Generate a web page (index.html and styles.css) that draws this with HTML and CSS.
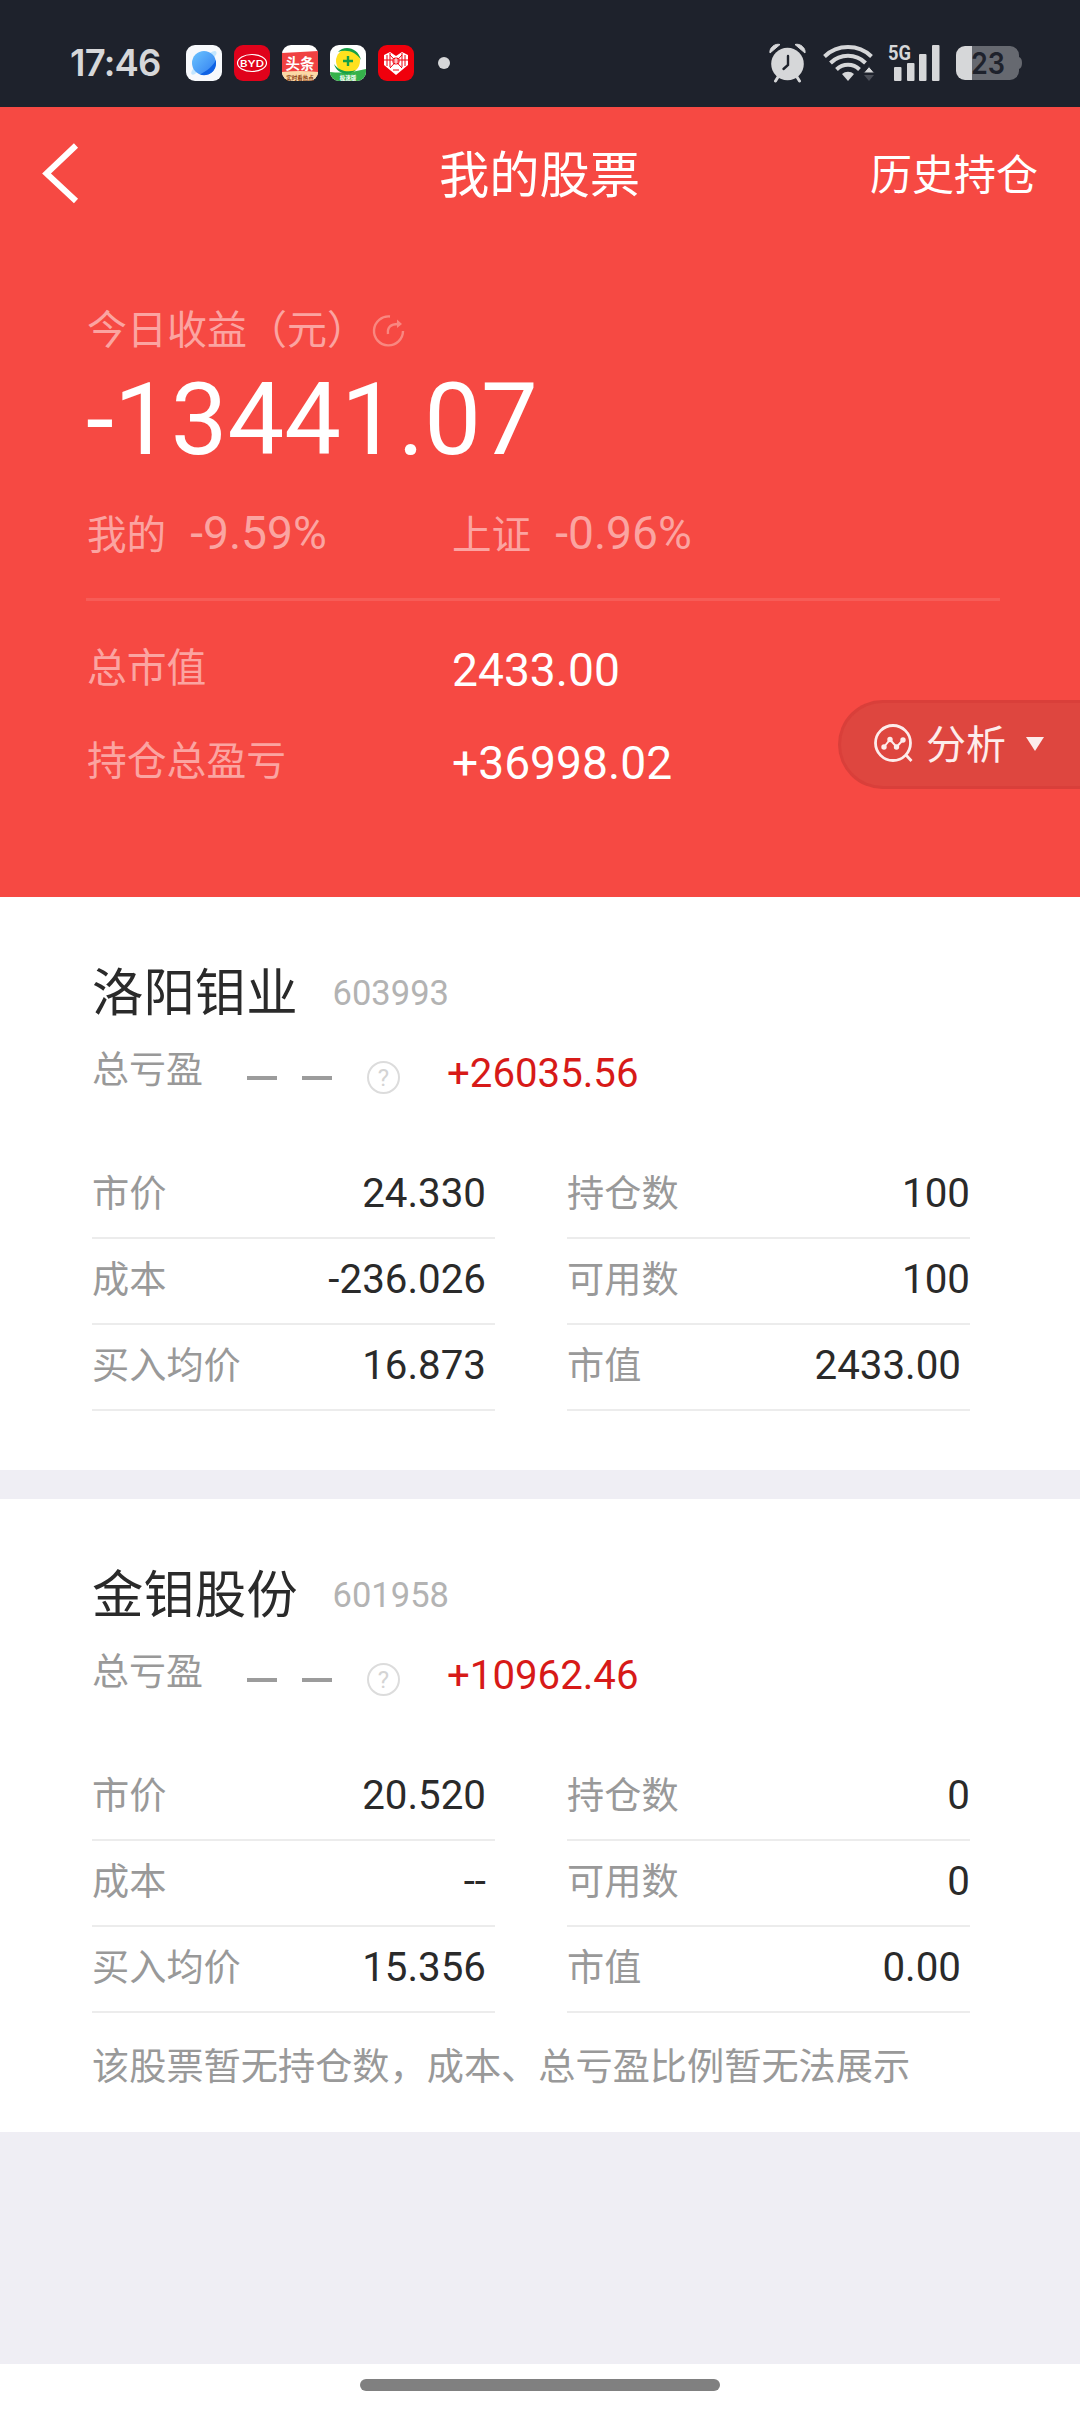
FILE: index.html
```html
<!DOCTYPE html>
<html lang="zh-CN">
<head>
  <meta charset="UTF-8">
  <meta name="viewport" content="width=device-width, initial-scale=1">
  <title>我的股票</title>
  <link rel="stylesheet" href="styles.css">
</head>
<body>
  <!-- 状态栏 -->
  <div class="status">
    <span class="time">17:46</span>
    <div class="apps">
      <svg width="36" height="36" viewBox="0 0 36 36">
        <defs>
          <linearGradient id="ball" x1="0" y1="0" x2="1" y2="1">
            <stop offset="0" stop-color="#6cc4ff"/>
            <stop offset="1" stop-color="#2f7cf0"/>
          </linearGradient>
        </defs>
        <rect width="36" height="36" rx="9" fill="#f7f9fc"/>
        <path d="M24 8c4-3 8-3 6 2L9 29c-4 2-5-1-2-5z" fill="#c3e6ff"/>
        <circle cx="18" cy="18" r="12" fill="url(#ball)"/>
        <path d="M30 17A12 12 0 0 1 14 29.500C21 26 27 21 30 15z" fill="#0f62e4"/>
      </svg>
      <svg width="36" height="36" viewBox="0 0 36 36">
        <rect width="36" height="36" rx="9" fill="#e0021b"/>
        <ellipse cx="18" cy="18" rx="14.500" ry="8.500" fill="none" stroke="#fff" stroke-width="1.200"/>
        <text class="byd" x="18" y="21.500" text-anchor="middle" textLength="24" lengthAdjust="spacingAndGlyphs">BYD</text>
      </svg>
      <svg width="36" height="36" viewBox="0 0 36 36">
        <rect width="36" height="36" rx="9" fill="#fff"/>
        <path d="M0 8l36-2v21H0z" fill="#f04142"/>
        <path d="M0 27q18-2 36 0a9 9 0 0 1-9 9H9a9 9 0 0 1-9-9z" fill="#fbd9a6"/>
        <text class="toutiao" x="18" y="23.500" text-anchor="middle">头条</text>
        <text class="tiny brown" x="18" y="34.500" text-anchor="middle">实时看热点</text>
      </svg>
      <svg width="36" height="36" viewBox="0 0 36 36">
        <rect width="36" height="36" rx="9" fill="#fff"/>
        <path d="M0 27q18 2 36-3v3a9 9 0 0 1-9 9H9a9 9 0 0 1-9-9z" fill="#35b34b"/>
        <circle cx="18" cy="16" r="12" fill="#ffe11e"/>
        <path d="M8 7C14 0 28 2 31 15 26 7 17 4 8 7zM4 19c5 7 14 9 22 6-6 6-19 5-22-6z" fill="#15a046"/>
        <path d="M18 11v10M13 16h10" stroke="#15a046" stroke-width="2.400"/>
        <text class="tiny white" x="18" y="34.500" text-anchor="middle">极速版</text>
      </svg>
      <svg width="36" height="36" viewBox="0 0 36 36">
        <rect width="36" height="36" rx="9" fill="#f0000c"/>
        <path d="M6 10l6-3 6 4 6-4 6 3v10L18 30 6 20z" fill="#fff"/>
        <path d="M9 10v11M12 8v14M27 10v11M24 8v14M6 15h24M12 10l12 13M24 10L12 23M15 25h6" stroke="#f0000c" stroke-width="1"/>
        <circle cx="18" cy="16" r="3.600" fill="#f0000c"/>
        <path d="M15.500 15h5M15.500 17h5M18 13v6" stroke="#fff" stroke-width="1"/>
      </svg>
    </div>
    <i class="dot"></i>

    <svg class="alarm" width="38" height="40" viewBox="0 0 38 40">
      <g fill="#d6d7d9">
        <path d="M1 10C0 5 6 0 11 1.500zM36 10C37 5 31 0 26 1.500z" stroke="#d6d7d9" stroke-linejoin="round"/>
        <circle cx="18.500" cy="21" r="16.300"/>
      </g>
      <path d="M9 34l-2.500 4M28 34l2.500 4" stroke="#d6d7d9" stroke-width="3" stroke-linecap="round"/>
      <path d="M19 13v9l-4.500 4" fill="none" stroke="#1e222c" stroke-width="2.400" stroke-linecap="round"/>
    </svg>
    <svg class="wifi" width="52" height="40" viewBox="0 0 52 40">
      <g fill="none" stroke="#d6d7d9" stroke-width="4">
        <path d="M1.500 13.500a34 34 0 0 1 47 0"/>
        <path d="M7.500 20a25 25 0 0 1 35 0"/>
        <path d="M13.500 26.500a16.500 16.500 0 0 1 23 0"/>
      </g>
      <path d="M19 31a9 9 0 0 1 12 0l-6 7z" fill="#d6d7d9"/>
      <path d="M40.500 30l5.500-6.500 5.500 6.500z" fill="#d6d7d9" stroke="#1e222c"/>
      <path d="M41 32h10l-5 6z" fill="#4b4e57"/>
    </svg>
    <svg class="signal" width="54" height="52" viewBox="0 -6 54 52">
      <text class="g5" x="0" y="16.500" textLength="23" lengthAdjust="spacingAndGlyphs">5G</text>
      <g fill="#d6d7d9">
        <rect x="6" y="24" width="7.500" height="14" rx="1"/>
        <rect x="19" y="20" width="7.500" height="18" rx="1"/>
        <rect x="31" y="11" width="7.500" height="27" rx="1"/>
        <rect x="44" y="2" width="7.500" height="36" rx="1"/>
      </g>
    </svg>
    <svg class="battery" width="68" height="34" viewBox="0 0 68 34">
      <path d="M9 0h7v34H9a9 9 0 0 1-9-9V9a9 9 0 0 1 9-9z" fill="#d6d7d9"/>
      <path d="M16 0h38a9 9 0 0 1 9 9v2q3 1 3 6t-3 6v2a9 9 0 0 1-9 9H16z" fill="#666970"/>
      <text class="level" x="32" y="28" text-anchor="middle" textLength="34" lengthAdjust="spacingAndGlyphs">23</text>
    </svg>
  </div>

  <!-- 收益总览 -->
  <div class="hero">
    <div class="nav">
      <svg class="back" width="40" height="62" viewBox="0 0 40 62">
        <path d="M35 2.500L5.500 30.500 35 58" fill="none" stroke="#fff" stroke-width="6"/>
      </svg>
      <span class="title">我的股票</span>
      <span class="history">历史持仓</span>
    </div>

    <div class="today">
      今日收益（元）
      <svg class="share" width="34" height="34" viewBox="0 0 34 34">
        <g fill="none" stroke="#f98780" stroke-width="2.400">
          <path d="M18 2.500A14.500 14.500 0 1 0 31 17"/>
          <path d="M16 20c-1-7 3-10 10-10"/>
        </g>
        <path d="M25 5.500l5 4.500-5 4z" fill="#f98780"/>
      </svg>
    </div>
    <div class="profit">-13441.07</div>
    <div class="rates">
      <div class="cell"><span>我的</span><b>-9.59%</b></div>
      <div class="cell"><span>上证</span><b>-0.96%</b></div>
    </div>
    <div class="line"></div>
    <div class="sum"><span>总市值</span><b>2433.00</b></div>
    <div class="sum"><span>持仓总盈亏</span><b>+36998.02</b></div>

    <div class="analyse">
      <svg width="40" height="40" viewBox="0 0 40 40">
        <g fill="none" stroke="#fdeceb">
          <circle cx="19" cy="19" r="17.500" stroke-width="2.800"/>
          <path d="M32 31l5.500 6" stroke-width="2.800"/>
          <path d="M10 23l6-7.500 6.500 7.500 6.500-7" stroke-width="2"/>
        </g>
        <g fill="#fdeceb">
          <circle cx="10" cy="23" r="2.700"/>
          <circle cx="16" cy="15.500" r="2.700"/>
          <circle cx="22.500" cy="23" r="2.700"/>
          <circle cx="29" cy="16" r="2.700"/>
        </g>
      </svg>
      <span>分析</span>
      <i class="arrow"></i>
    </div>
  </div>

  <!-- 持仓 -->
  <div class="card">
    <div class="name">洛阳钼业<span class="code">603993</span></div>
    <div class="pl">
      <span class="label">总亏盈</span>
      <i class="dash"></i><i class="dash"></i>
      <span class="help">?</span>
      <b>+26035.56</b>
    </div>
    <div class="grid">
      <div class="row"><span>市价</span><b>24.330</b></div>
      <div class="row"><span>持仓数</span><b>100</b></div>
      <div class="row"><span>成本</span><b>-236.026</b></div>
      <div class="row"><span>可用数</span><b>100</b></div>
      <div class="row"><span>买入均价</span><b>16.873</b></div>
      <div class="row total"><span>市值</span><b>2433.00</b></div>
    </div>
  </div>

  <div class="card last">
    <div class="name">金钼股份<span class="code">601958</span></div>
    <div class="pl">
      <span class="label">总亏盈</span>
      <i class="dash"></i><i class="dash"></i>
      <span class="help">?</span>
      <b>+10962.46</b>
    </div>
    <div class="grid">
      <div class="row"><span>市价</span><b>20.520</b></div>
      <div class="row"><span>持仓数</span><b>0</b></div>
      <div class="row"><span>成本</span><b>--</b></div>
      <div class="row"><span>可用数</span><b>0</b></div>
      <div class="row"><span>买入均价</span><b>15.356</b></div>
      <div class="row total"><span>市值</span><b>0.00</b></div>
    </div>
    <p class="note">该股票暂无持仓数，成本、总亏盈比例暂无法展示</p>
  </div>

  <div class="home"><i></i></div>
</body>
</html>
```

FILE: styles.css
```css
* {
  box-sizing: border-box;
}
body {
  margin: 0;
  width: 1080px;
  height: 2412px;
  display: flex;
  flex-direction: column;
  overflow: hidden;
  font-family: Roboto, "Noto Sans CJK SC", sans-serif;
  background: #efeef4;
  color: #2a2a2a;
}
b {
  font-weight: 400;
}
svg {
  display: block;
  flex: none;
}

/* status bar */
.status {
  height: 107px;
  display: flex;
  align-items: center;
  padding: 18px 0 0 70px;
  background: #1e222c;
  flex: none;
}
.time {
  width: 116px;
  font: 600 36.5px/40px Inter, sans-serif;
  letter-spacing: -0.8px;
  color: #d6d7d9;
}
.apps {
  display: flex;
  gap: 12px;
}
.byd {
  font: 600 9.5px Inter, sans-serif;
  fill: #fff;
}
.toutiao {
  font: 700 14.5px "Noto Sans CJK SC", sans-serif;
  fill: #fff;
}
.tiny {
  font: 700 5.5px "Noto Sans CJK SC", sans-serif;
}
.brown {
  fill: #8a3d12;
}
.white {
  fill: #fff;
}
.dot {
  width: 12px;
  height: 12px;
  margin-left: 24px;
  border-radius: 50%;
  background: #d6d7d9;
}
.alarm {
  margin-left: 319px;
}
.wifi {
  margin-left: 16px;
}
.signal {
  margin-left: 13px;
}
.battery {
  margin-left: 14px;
}
.g5 {
  font: 700 21px Roboto, sans-serif;
  fill: #d6d7d9;
}
.level {
  font: 600 30px Inter, sans-serif;
  fill: #1e222c;
}

/* red header */
.hero {
  position: relative;
  height: 790px;
  flex: none;
  background: #f64943;
  color: #fff;
}
.nav {
  height: 134px;
  display: grid;
  grid-template-columns: 1fr auto 1fr;
  align-items: center;
  padding: 0 42px 0 41px;
}
.title {
  margin-bottom: 6px;
  font-size: 50.3px;
}
.history {
  margin-bottom: 5px;
  font-size: 42px;
  justify-self: end;
}
.today {
  display: flex;
  align-items: center;
  margin: 60px 0 0 87px;
  font-size: 40px;
  line-height: 60px;
  color: #fba4a1;
}
.share {
  margin-left: 5px;
}
.profit {
  margin-left: 86px;
  font-size: 101px;
  line-height: 117px;
}
.rates {
  display: grid;
  grid-template-columns: 365px 365px;
  margin: 25px 0 0 87px;
  line-height: 60px;
  color: #fba4a1;
}
.cell {
  display: flex;
  align-items: baseline;
  gap: 24px;
}
.cell span {
  font-size: 39.6px;
}
.cell b {
  font-size: 46.2px;
}
.line {
  height: 3px;
  margin: 32px 80px 39px 86px;
  background: #f75c57;
}
.sum {
  display: grid;
  grid-template-columns: 365px auto;
  margin: 0 0 33px 87px;
  line-height: 60px;
}
.sum span {
  margin-top: -1px;
  font-size: 39.8px;
  color: #fba4a1;
}
.sum b {
  font-size: 46.2px;
}
/* floats over the right edge */
.analyse {
  position: absolute;
  top: 593px;
  right: 0;
  width: 242px;
  height: 89px;
  display: flex;
  align-items: center;
  padding: 0 0 2px 33px;
  border: 3px solid #d93f3a;
  border-right: 0;
  border-radius: 45px 0 0 45px;
  background: #de463f;
  color: #fdeceb;
  font-size: 40px;
}
.analyse span {
  margin: 0 0 3px 12px;
}
.arrow {
  margin-left: 20px;
  border: 9px solid transparent;
  border-top: 14px solid #fdeceb;
  border-bottom: 0;
}

/* stock cards */
.card {
  height: 573px;
  flex: none;
  padding: 67px 110px 0 92px;
  background: #fff;
}
.last {
  height: 633px;
  margin-top: 29px;
}
.name {
  display: flex;
  align-items: center;
  height: 60px;
  font-size: 51.4px;
  line-height: 60px;
}
.code {
  margin: 0 0 3px 35px;
  font-size: 34.5px;
  color: #b3b3b3;
}
.pl {
  display: flex;
  align-items: center;
  height: 60px;
  margin-top: 19px;
}
.label {
  width: 155px;
  margin-bottom: 13px;
  font-size: 37px;
  color: #999;
}
.dash {
  width: 30px;
  height: 4px;
  margin: 10px 25px 0 0;
  background: #9c9c9c;
}
.help {
  width: 33px;
  height: 33px;
  margin: 8px 47px 0 10px;
  border: 2px solid #dcdcdc;
  border-radius: 50%;
  font-size: 24px;
  line-height: 30px;
  text-align: center;
  color: #d4d4d4;
}
.pl b {
  font-size: 40.2px;
  color: #d71a18;
}
.grid {
  display: grid;
  grid-template-columns: 403px 403px;
  column-gap: 72px;
  margin-top: 50px;
}
.row {
  display: flex;
  justify-content: space-between;
  height: 86px;
  padding-right: 9px;
  border-bottom: 2px solid #ececec;
  line-height: 81px;
}
.row:nth-child(even) {
  padding-right: 0;
}
.row.total {
  padding-right: 9px;
}
.row span {
  margin-top: 1px;
  font-size: 37.2px;
  color: #999;
}
.row b {
  font-size: 40.3px;
}
.note {
  margin: 24px 0 0;
  font-size: 37.2px;
  line-height: 60px;
  color: #999;
}

/* gesture bar */
.home {
  height: 48px;
  margin-top: auto;
  display: flex;
  justify-content: center;
  padding-top: 15px;
  background: #fff;
}
.home i {
  width: 360px;
  height: 12px;
  border-radius: 6px;
  background: #808080;
}
```
